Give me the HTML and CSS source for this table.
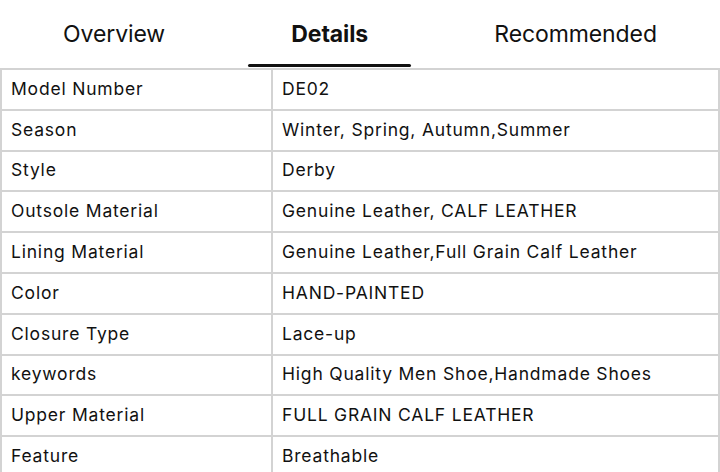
FILE: index.html
```html
<!DOCTYPE html>
<html>
<head>
<meta charset="utf-8">
<link rel="stylesheet" href="styles.css">
</head>
<body>
<div class="page">
  <nav class="tabs">
    <div class="tab">Overview</div>
    <div class="tab active">Details</div>
    <div class="tab">Recommended</div>
  </nav>
  <table class="specs">
    <tr><td class="k">Model Number</td><td class="v">DE02</td></tr>
    <tr><td class="k">Season</td><td class="v">Winter, Spring, Autumn,Summer</td></tr>
    <tr><td class="k">Style</td><td class="v">Derby</td></tr>
    <tr><td class="k">Outsole Material</td><td class="v">Genuine Leather, CALF LEATHER</td></tr>
    <tr><td class="k">Lining Material</td><td class="v">Genuine Leather,Full Grain Calf Leather</td></tr>
    <tr><td class="k">Color</td><td class="v">HAND-PAINTED</td></tr>
    <tr><td class="k">Closure Type</td><td class="v">Lace-up</td></tr>
    <tr><td class="k">keywords</td><td class="v">High Quality Men Shoe,Handmade Shoes</td></tr>
    <tr><td class="k">Upper Material</td><td class="v">FULL GRAIN CALF LEATHER</td></tr>
    <tr><td class="k">Feature</td><td class="v">Breathable</td></tr>
  </table>
</div>
</body>
</html>
```
FILE: styles.css
```css
html, body {
  margin: 0;
  padding: 0;
  background: #fff;
}
body {
  font-family: Inter, "Noto Sans", sans-serif;
  color: #111;
  overflow: hidden;
}
.page {
  width: 720px;
}
.tabs {
  display: flex;
  justify-content: space-around;
  height: 68px;
  box-sizing: border-box;
}
.tab {
  position: relative;
  font-size: 23px;
  line-height: 68px;
  letter-spacing: -0.1px;
  color: #111;
}
.tab.active {
  font-weight: 700;
}
.tab.active::after {
  content: "";
  position: absolute;
  left: 50%;
  bottom: 1px;
  width: 163px;
  margin-left: -82px;
  height: 3px;
  border-radius: 2px;
  background: #111;
}
.specs {
  width: 720px;
  border-collapse: collapse;
  table-layout: fixed;
}
.specs td {
  border: 2px solid #d3d3d3;
  height: 40.8px;
  padding: 0 0 2px 9px;
  font-size: 17.5px;
  letter-spacing: 0.8px;
  box-sizing: border-box;
  vertical-align: middle;
  white-space: nowrap;
}
.specs td.k {
  width: 271px;
}
```
